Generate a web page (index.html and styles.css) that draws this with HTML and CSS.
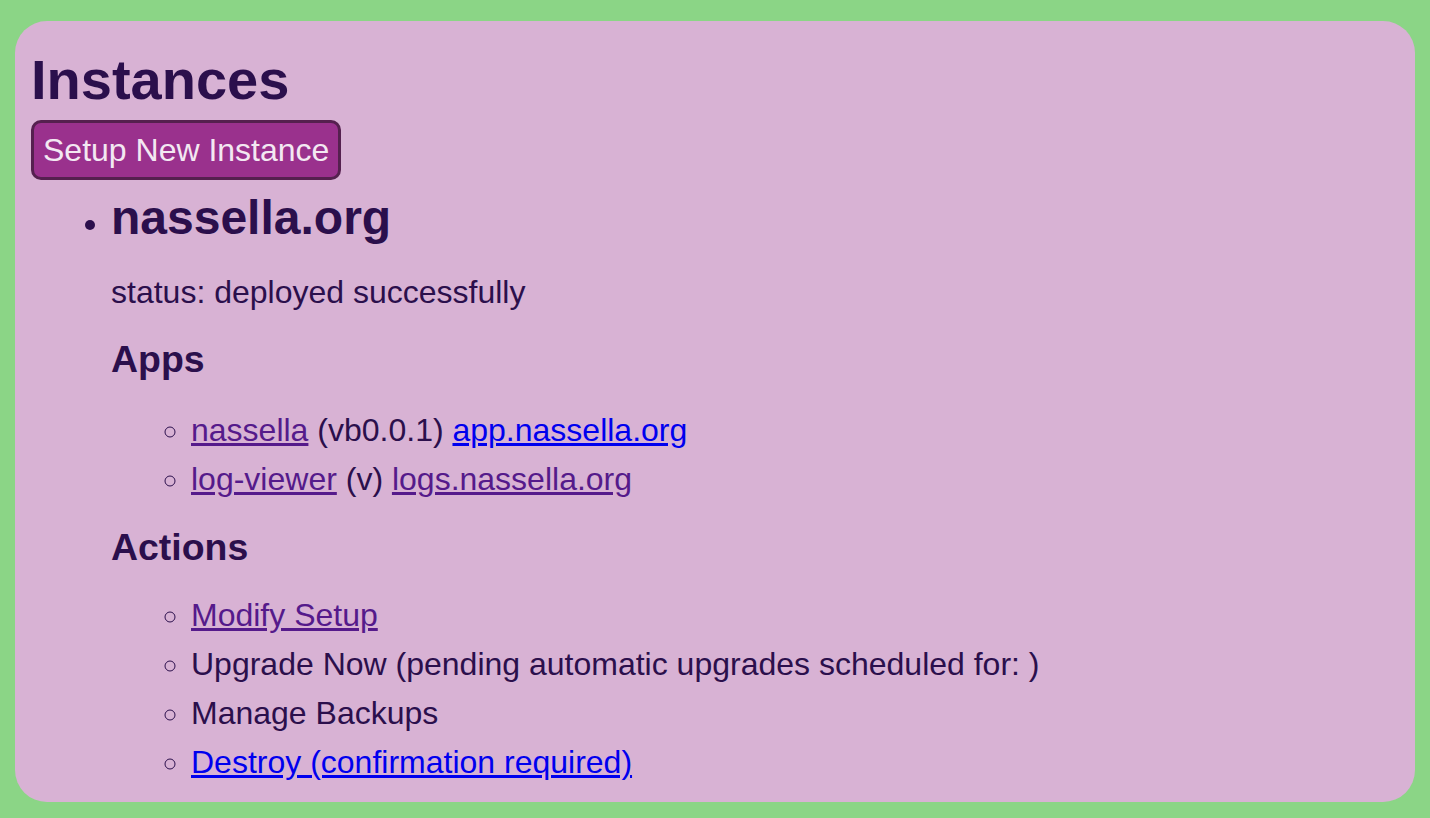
FILE: index.html
```html
<!DOCTYPE html>
<html lang="en">
<head>
<meta charset="utf-8">
<title>Instances</title>
<link rel="stylesheet" href="styles.css">
</head>
<body>
<main class="card">
  <h1 class="title">Instances</h1>
  <div class="toolbar">
    <button class="btn" type="button">Setup New Instance</button>
  </div>
  <ul class="instances">
    <li class="instance">
      <h2 class="instance-name">nassella.org</h2>
      <p class="status">status: deployed successfully</p>
      <h3 class="section-title">Apps</h3>
      <ul class="sublist apps">
        <li><a class="visited" href="#">nassella</a> (vb0.0.1) <a class="link" href="#">app.nassella.org</a></li>
        <li><a class="visited" href="#">log-viewer</a> (v) <a class="visited" href="#">logs.nassella.org</a></li>
      </ul>
      <h3 class="section-title">Actions</h3>
      <ul class="sublist actions">
        <li><a class="visited" href="#">Modify Setup</a></li>
        <li>Upgrade Now (pending automatic upgrades scheduled for: )</li>
        <li>Manage Backups</li>
        <li><a class="link" href="#">Destroy (confirmation required)</a></li>
      </ul>
    </li>
  </ul>
</main>
</body>
</html>
```

FILE: styles.css
```css
html, body {
  margin: 0;
}

body {
  background: #8bd586;
  padding: 21px 15px 16px;
  font-family: "Liberation Sans", Arial, Helvetica, sans-serif;
  font-size: 32px;
  color: #2b0f4c;
}

.card {
  display: flow-root;
  background: #d8b2d4;
  border-radius: 32px;
  padding: 27px 16px 15px;
}

.title {
  margin: 0 0 8px;
  font-size: 56px;
  line-height: 64px;
  font-weight: bold;
}

.toolbar {
  display: flex;
}

.btn {
  font-family: inherit;
  font-size: 32px;
  line-height: 38px;
  color: #f3e8f2;
  background: #9a318d;
  border: 3px solid #55204f;
  border-radius: 10px;
  padding: 8px 9px 8px;
  margin: 0;
}

.instances {
  margin: 0;
  padding-left: 80px;
  list-style: disc;
}

.instance-name {
  margin: 10px 0 22px;
  font-size: 48px;
  line-height: 56px;
}

.status {
  margin: 0;
  line-height: 48px;
}

.section-title {
  margin: 20.5px 0 0;
  font-size: 37.44px;
  line-height: 44px;
}

.sublist + .section-title {
  margin-top: 21.8px;
}

.sublist {
  margin: 0;
  padding-left: 80px;
  list-style: circle;
}

.apps {
  margin-top: 25px;
}

.actions {
  margin-top: 22px;
}

.sublist li {
  line-height: 49px;
}

.visited {
  color: #551a8b;
}

.link {
  color: #0000ee;
}
```
